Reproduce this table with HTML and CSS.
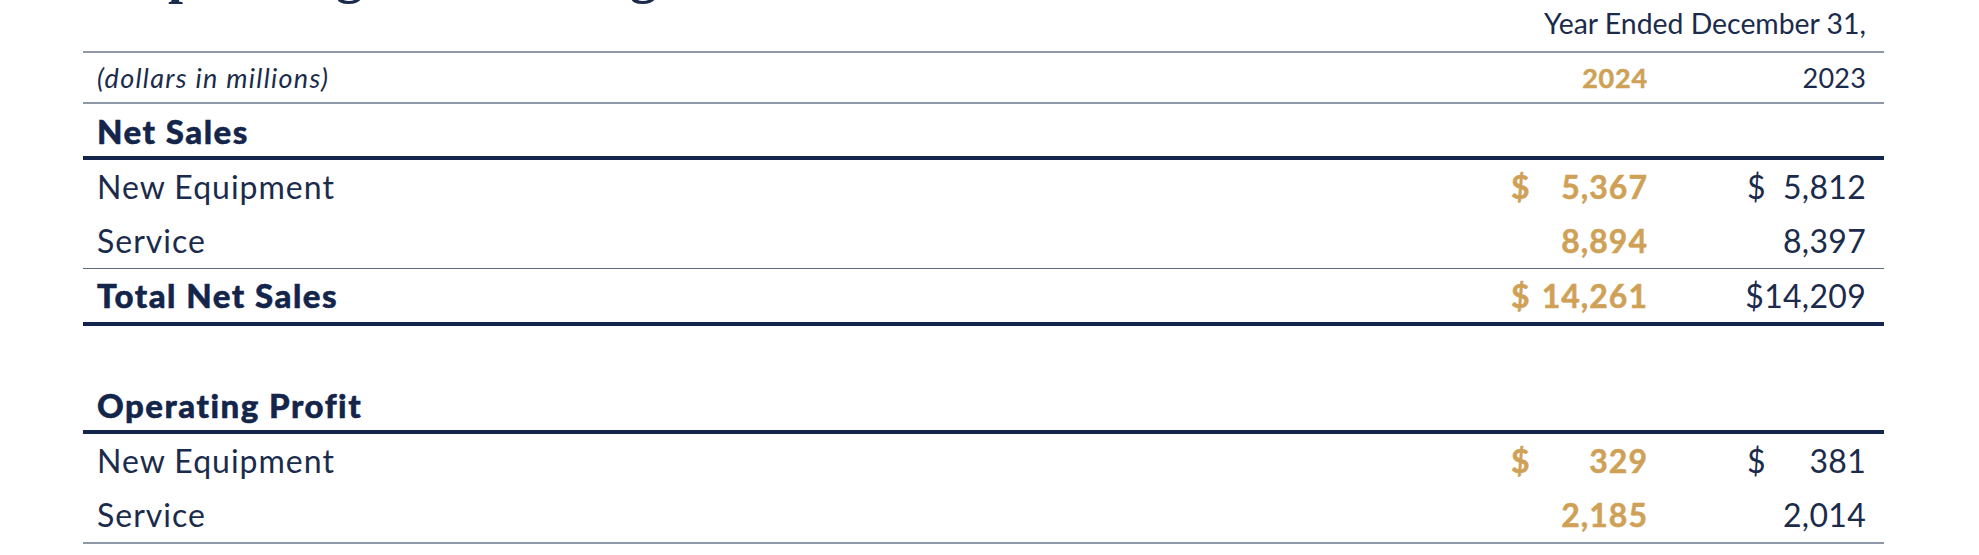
FILE: index.html
```html
<!DOCTYPE html>
<html lang="en">
<head>
<meta charset="utf-8">
<title>Operating Results: Segments</title>
<link rel="stylesheet" href="styles.css">
</head>
<body>
<div class="page">
  <h1 class="title">Operating Results: Segments</h1>
  <div class="table">
    <div class="row r-period">
      <div class="cell period">Year Ended December 31,</div>
    </div>
    <div class="row r-units">
      <div class="cell label units">(dollars in millions)</div>
      <div class="cell colA num cur yr">2024</div>
      <div class="cell colB num prev yr">2023</div>
    </div>
    <div class="row r-section">
      <div class="cell label strong">Net Sales</div>
    </div>
    <div class="row r-data">
      <div class="cell label">New Equipment</div>
      <div class="cell colA num cur"><span class="cs">$</span><span>5,367</span></div>
      <div class="cell colB num prev"><span class="cs">$</span><span>5,812</span></div>
    </div>
    <div class="row r-data r-sub">
      <div class="cell label">Service</div>
      <div class="cell colA num cur"><span>8,894</span></div>
      <div class="cell colB num prev"><span>8,397</span></div>
    </div>
    <div class="row r-total">
      <div class="cell label strong">Total Net Sales</div>
      <div class="cell colA num cur"><span class="cs">$</span><span>14,261</span></div>
      <div class="cell colB num prev"><span>$14,209</span></div>
    </div>
    <div class="spacer"></div>
    <div class="row r-section">
      <div class="cell label strong">Operating Profit</div>
    </div>
    <div class="row r-data">
      <div class="cell label">New Equipment</div>
      <div class="cell colA num cur"><span class="cs">$</span><span>329</span></div>
      <div class="cell colB num prev"><span class="cs">$</span><span>381</span></div>
    </div>
    <div class="row r-data r-last">
      <div class="cell label">Service</div>
      <div class="cell colA num cur"><span>2,185</span></div>
      <div class="cell colB num prev"><span>2,014</span></div>
    </div>
  </div>
</div>
</body>
</html>
```

FILE: styles.css
```css
* { box-sizing: border-box; }
html, body { margin: 0; padding: 0; background: #ffffff; }
body {
  font-family: Lato, "Open Sans", "Noto Sans", sans-serif;
  color: #1b2b4b;
  overflow: hidden;
}
.page {
  width: 1801px;
  margin-left: 83px;
}
.title {
  font-family: "Liberation Serif", "Times New Roman", serif;
  font-weight: 700;
  font-size: 54px;
  line-height: 54px;
  margin: -53px 0 0;
  padding-left: 43px;
  color: #1b2b4b;
  white-space: nowrap;
}
.row {
  display: grid;
  grid-template-columns: 1fr 172px 219px;
  align-items: start;
}
.cell {
  white-space: nowrap;
}
.label { padding-left: 14px; }
.colA { padding: 0 17px 0 18px; }
.colB { padding: 0 18px 0 82px; }
.num {
  display: flex;
  justify-content: flex-end;
}
.num .cs { margin-right: auto; }
.cur {
  color: #cfa157;
  font-weight: 700;
  letter-spacing: 1px;
  -webkit-text-stroke: 0.5px #cfa157;
}
.prev { color: #1b2b4b; font-weight: 400; letter-spacing: 0.3px; }

.r-period {
  height: 52px;
  border-bottom: 2px solid #8f98a9;
}
.period {
  grid-column: 2 / 4;
  text-align: right;
  padding-right: 18px;
  padding-top: 2px;
  font-size: 28.4px;
  line-height: 41px;
}

.r-units {
  padding-top: 1px;
  border-bottom: 2px solid #8f98a9;
  font-size: 27px;
  line-height: 48px;
}
.units { font-style: italic; letter-spacing: 1.3px; }
.yr { font-size: 27px; }
.cur.yr { letter-spacing: 0.8px; }
.prev.yr { letter-spacing: 0.2px; }

.r-section {
  padding-top: 2px;
  font-size: 33px;
  line-height: 50px;
  border-bottom: 4px solid #13254a;
}
.strong {
  font-weight: 900;
  color: #13254a;
  font-size: 33px;
  letter-spacing: 1.5px;
  -webkit-text-stroke: 0.5px #13254a;
}

.r-data {
  font-size: 32px;
  line-height: 54px;
}
.r-data .label { letter-spacing: 1px; }
.r-sub { border-bottom: 1.5px solid #5d6982; }
.r-last { border-bottom: 2px solid #8f98a9; }
.r-total {
  font-size: 32px;
  line-height: 53px;
  border-bottom: 4px solid #13254a;
}
.spacer { height: 52px; }
```
